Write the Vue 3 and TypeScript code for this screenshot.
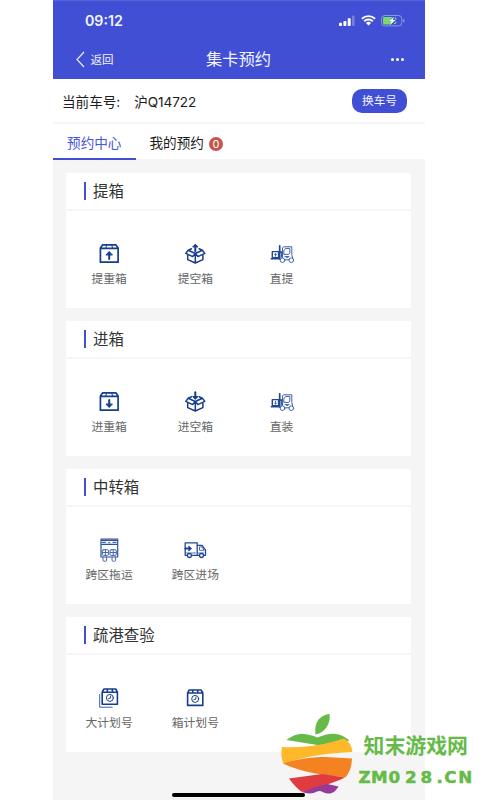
<script setup lang="ts">
type IconName = 'boxUp' | 'boxDown' | 'openUp' | 'openDown' | 'forkUp' | 'forkDown' | 'trailer' | 'truck' | 'plans' | 'plan'

interface Action {
  label: string
  icon: IconName
}

interface Section {
  title: string
  actions: Action[]
}

const sections: Section[] = [
  {
    title: '提箱',
    actions: [
      { label: '提重箱', icon: 'boxUp' },
      { label: '提空箱', icon: 'openUp' },
      { label: '直提', icon: 'forkUp' },
    ],
  },
  {
    title: '进箱',
    actions: [
      { label: '进重箱', icon: 'boxDown' },
      { label: '进空箱', icon: 'openDown' },
      { label: '直装', icon: 'forkDown' },
    ],
  },
  {
    title: '中转箱',
    actions: [
      { label: '跨区拖运', icon: 'trailer' },
      { label: '跨区进场', icon: 'truck' },
    ],
  },
  {
    title: '疏港查验',
    actions: [
      { label: '大计划号', icon: 'plans' },
      { label: '箱计划号', icon: 'plan' },
    ],
  },
]
</script>

<template>
  <div class="screen">
    <main class="phone">
      <header class="header">
        <div class="status">
          <span class="time">09:12</span>
          <svg class="status-icons" width="68" height="14" viewBox="0 0 68 14">
            <g fill="#fff">
              <rect x="1" y="8.7" width="3" height="3.3" rx=".8" />
              <rect x="5.4" y="7" width="3" height="5" rx=".8" />
              <rect x="9.7" y="4.2" width="3" height="7.8" rx=".8" />
              <rect x="14" y="1.5" width="2.6" height="10.5" rx=".8" opacity=".28" />
              <path d="M28 9a3.2 3.2 0 0 1 5 0l-2.5 2.6z" />
            </g>
            <g fill="none" stroke="#fff" stroke-width="1.9">
              <path d="M23.9 4.8a9.6 9.6 0 0 1 13.2 0M26.2 7.2a6.3 6.3 0 0 1 8.6 0" />
            </g>
            <rect x="43.5" y="1.5" width="20.3" height="10.4" rx="3.3" fill="none" stroke="#fff" opacity=".4" />
            <path d="M46.4 3h8.2l-4 5h2.8l-.7 2.5h-6.3a1.4 1.4 0 0 1-1.4-1.4V4.400A1.400 1.400 0 0 1 46.400 3zM57.500 3l-1.300 2.500h2.200V4.200zM55 10.500l3.300-3.500v2.500z" fill="#78dc69" />
            <path d="M56 2.800 50.600 7.500h2.800l-1.400 3.400 5.500-4.900h-2.800z" fill="#fff" />
            <path d="M65.200 5v3.600q1.400-.7 1.400-1.800T65.200 5z" fill="#fff" opacity=".5" />
          </svg>
        </div>
        <div class="nav">
          <div class="back">
            <svg width="9" height="17" viewBox="0 0 9 17"><path d="M8 1 1 8.500l7 7.500" fill="none" stroke="#e8eaff" stroke-width="1.200" /></svg>
            <span>返回</span>
          </div>
          <h1>集卡预约</h1>
          <div class="more"><i /><i /><i /></div>
        </div>
      </header>

      <div class="vehicle">
        <span class="vehicle-label">当前车号:</span>
        <span class="plate">沪Q14722</span>
        <button class="change">换车号</button>
      </div>

      <nav class="tabs">
        <div class="tab active">预约中心</div>
        <div class="tab">我的预约<span class="badge">0</span></div>
      </nav>

      <div class="content">
        <section v-for="section in sections" :key="section.title" class="card">
          <h2><span>{{ section.title }}</span></h2>
          <div class="grid">
            <div v-for="action in section.actions" :key="action.label" class="action">
              <svg class="icon" width="26" height="26" viewBox="0 0 26 26" fill="none" stroke="#173e8c" stroke-linecap="round" stroke-linejoin="round">
                <g v-if="action.icon === 'boxUp' || action.icon === 'boxDown'" stroke-width="1.700">
                  <path d="M4.400 7v14.200h17.700V7l-2.300-3.200H6.700zM4.400 7.300h17.700" />
                  <path d="M10.500 4.200 9.800 7M15.800 4.200l.7 2.800" stroke-width="1" />
                  <path v-if="action.icon === 'boxUp'" d="M13.200 17.900v-5.500" stroke-width="2" />
                  <path v-else d="M13.200 11v5.500" stroke-width="2" />
                  <path v-if="action.icon === 'boxUp'" d="m10.200 13.700 3-3.200 3 3.200z" fill="#173e8c" stroke-width="1" />
                  <path v-else d="m10.200 15.300 3 3.200 3-3.200z" fill="#173e8c" stroke-width="1" />
                </g>
                <g v-else-if="action.icon === 'openUp' || action.icon === 'openDown'" stroke-width="1.500">
                  <path d="M9.500 7.800 6.200 9.200 13.300 12.500l7.100-3.300L17.100 7.800M6.200 9.200l-2.400 3.200 6.900 3.200 2.600-3.100 2.600 3.100 6.900-3.200-2.400-3.200M5.700 14v4.600l7.600 3.400 7.600-3.400V14M13.300 12.800v8.800" />
                  <path v-if="action.icon === 'openUp'" d="M13.300 10.300V4.500" stroke-width="2" />
                  <path v-else d="M13.300 3.300v6" stroke-width="2" />
                  <path v-if="action.icon === 'openUp'" d="m10.900 5.700 2.400-2.500 2.400 2.500z" fill="#173e8c" stroke-width="1" />
                  <path v-else d="m10.900 7.800 2.400 2.500 2.400-2.500z" fill="#173e8c" stroke-width="1" />
                </g>
                <g v-else-if="action.icon === 'forkUp' || action.icon === 'forkDown'" stroke="#3e63a9" stroke-width="1">
                  <path d="M3.300 10.600h6.300v6H3.300zM2.200 17.800h8.200" stroke-width="1.400" stroke="#204797" />
                  <path d="M10.700 4.800v13M10.700 11h2.300v5" stroke-width="1.700" stroke="#204797" />
                  <path d="M13.500 16V7l1-1.200h8.300v7.700l.8 3.500M16.200 7.800l-1.400 2v3.600h5l1-1.500V7.800zM16 15.600h4M17 15.600l1.200 1.400 1.200-1.400" />
                  <circle cx="13.500" cy="19.200" r="2.300" /><circle cx="22.300" cy="19.200" r="2.300" />
                  <path d="M16 18.800h3.800" />
                  <path v-if="action.icon === 'forkUp'" d="M6.500 15.300v-2.800M5.500 13.500l1-1 1 1" />
                  <path v-else d="M6.500 12.300v2.800M5.500 14.100l1 1 1-1" />
                </g>
                <g v-else-if="action.icon === 'trailer'" stroke="#4669ab" stroke-width="1">
                  <path d="M5 2h16.700v18H5zM5 3.300h16.700M5 7.300h16.700" stroke-width="1.200" stroke="#2b529c" />
                  <path d="M6.500 5.300h3M17 5.300h3M12.800 5.600h1" stroke-width="1.300" />
                  <rect x="6.300" y="12.700" width="6.300" height="5.700" rx="1.300" /><rect x="14" y="12.700" width="6.300" height="5.700" rx="1.300" />
                  <path d="M9.400 12.700v5.300M6.500 15.500h6M17.200 12.700v5.300M14.400 15.500h5.800M7 20v3.200q0 1 1 1h1.600q1 0 1-1V20M16 20v3.200q0 1 1 1h1.600q1 0 1-1V20" />
                </g>
                <g v-else-if="action.icon === 'truck'" stroke="#204797" stroke-width="1.300">
                  <path d="M3.200 5.800h12v12.500h-5.200M5.300 18.300H3.200V5.800M15.200 8.300h5l3.300 4.800v5.200h-1.600M17 18.300h-1.800" />
                  <path d="M17.500 10.300v3h4.500l-1.900-3zM4.500 16h9M16.500 16h5" stroke-width=".8" />
                  <path d="M3.200 11.500h4.500" stroke-width="1.800" /><path d="m7 9.200 2.600 2.300L7 13.800z" fill="#173e8c" stroke-width=".8" />
                  <circle cx="7.400" cy="18.500" r="2" /><circle cx="19.500" cy="18.500" r="2" />
                </g>
                <g v-else-if="action.icon === 'plans'" stroke-width="1.600">
                  <path d="M6.200 7v12.300h15.200V7l-1.700-3H8zM6.200 7.200h15.200M11.300 4.200v2.500M16.400 4.200v2.500" />
                  <path d="M3.700 9.500v12.700h12.500" stroke-width="1" stroke="#3b60a6" />
                  <circle cx="13.900" cy="12.900" r="3.500" stroke-width="1" /><path d="M14.600 11v2.100l-2 .5" stroke-width=".9" />
                </g>
                <g v-else stroke-width="1.600">
                  <path d="M5.600 8v12.400h15.200V8l-1.700-3H7.300zM5.600 8h15.200M10.700 5.200v2.500M15.700 5.200v2.500" />
                  <circle cx="13.200" cy="13.900" r="3.500" stroke-width="1" /><path d="M13.900 12v2.100l-2 .5" stroke-width=".9" />
                </g>
              </svg>
              <span>{{ action.label }}</span>
            </div>
          </div>
        </section>
      </div>
      <div class="home-bar" />
    </main>

    <svg class="watermark" width="210" height="95" viewBox="270 705 210 95">
      <path d="M315.500 734.500c-1.500-11 3-19 14-20.700 1.500 9-4 19-14 20.700z" fill="#65ba48" />
      <path d="M286.500 740c11-8.500 20-6.500 31-2.500 12-5 21-6 32 3l-29 5z" fill="#65ba48" />
      <path d="M282 747c24 1.500 44-3 62-8.500 5.500 3 8 8 8.300 13.500-22 1-46 4-69 11.500-2-5-2.500-11-1.300-16.500z" fill="#fdb92a" />
      <path d="M283 763.500c12-4 27-6.500 43-6.500l26 1.500c-.3 7.500-2 13.500-6.500 18.700-21-1.500-45-5-62.500-13.700z" fill="#f58220" />
      <path d="M289 778.500 322 774l23 3.500c-11 5.500-24 9-43 14.500-5-3.500-9-8-13-13.500z" fill="#e03c3f" />
      <path d="M302 792c9-3.500 17-6.500 25.500-8l11 2.500c-3 5-6 7.500-11 7-4-.4-7-4-10.500-2-4 2.500-10 2.500-15 .5z" fill="#963a96" />
      <text class="site-name" x="363.500" y="753">知末游戏网</text>
      <text class="site-url" x="358.500 371 388.500 405 420.500 436.500 444.200 458.200" y="783">ZM028.CN</text>
    </svg>
  </div>
</template>

<style>
body {
  margin: 0;
  background: #fff;
}
</style>

<style scoped>
.screen {
  position: relative;
  width: 480px;
  height: 800px;
  overflow: hidden;
  font-family: Inter, "Noto Sans CJK SC", sans-serif;
}
.phone {
  position: relative;
  width: 372px;
  height: 800px;
  margin-left: 53px;
  background: #f5f5f5;
}
.header {
  height: 79px;
  box-sizing: border-box;
  border-top: 1px solid #5765dc;
  background: #404fd4;
  color: #f4f5ff;
}
.status {
  display: flex;
  align-items: center;
  justify-content: space-between;
  height: 38px;
  padding: 0 19px 0 32px;
}
.status-icons {
  margin-top: 1px;
}
.time {
  font-size: 14.2px;
  font-weight: 600;
}
.nav {
  display: grid;
  grid-template-columns: 1fr auto 1fr;
  align-items: center;
  height: 40px;
  padding: 0 21px 0 23px;
}
.back {
  display: flex;
  align-items: center;
  gap: 5.5px;
  font-size: 11.5px;
}
h1 {
  margin: 0 3px 0 0;
  font-size: 16.3px;
  line-height: 20px;
  font-weight: 400;
}
.more {
  display: flex;
  justify-content: flex-end;
  gap: 2px;
}
.more i {
  width: 3px;
  height: 3px;
  border-radius: 50%;
  background: #fff;
}
.vehicle {
  display: flex;
  align-items: center;
  height: 43px;
  padding: 0 18px 0 9px;
  border-bottom: 2px solid #f5f5f5;
  background: #fff;
  color: #1c1c1c;
  font-size: 13.6px;
}
.plate {
  margin-left: 14px;
  font-size: 13.6px;
  letter-spacing: -.1px;
}
.change {
  margin-left: auto;
  width: 55px;
  height: 24px;
  padding: 0;
  border: 0;
  border-radius: 10px;
  background: #404fd4;
  color: #f4f5ff;
  font: 11.7px/24px Inter, "Noto Sans CJK SC", sans-serif;
}
.tabs {
  display: flex;
  height: 36px;
  background: linear-gradient(#fff 35px, #f5f5f5 35px);
  color: #1c1c1c;
  font-size: 13.6px;
  line-height: 39px;
}
.tab {
  display: flex;
  align-items: center;
  box-sizing: border-box;
  height: 36px;
  padding: 2px 0 0 14px;
}
.tab.active {
  width: 82.5px;
  padding: 4px 0 0;
  justify-content: center;
  border-bottom: 2px solid #404fd4;
  color: #4655dc;
}
.badge {
  width: 14px;
  height: 14px;
  margin: 2px 0 0 5px;
  border-radius: 50%;
  background: #c5564b;
  color: #fff;
  font-size: 11px;
  line-height: 14px;
  text-align: center;
}
.content {
  display: flex;
  flex-direction: column;
  gap: 13px;
  padding: 13px 14px 0 13px;
}
.card {
  height: 135px;
  background: #fff;
}
h2 {
  display: flex;
  align-items: center;
  gap: 7px;
  height: 36px;
  margin: 0;
  padding-left: 18px;
  border-bottom: 2px solid #f5f5f5;
  color: #333;
  font-size: 15.4px;
  line-height: 20px;
  font-weight: 400;
}
h2::before {
  content: "";
  width: 2px;
  height: 18px;
  background: #404fd4;
}
h2 span {
  padding-top: 2px;
}
.grid {
  display: grid;
  grid-template-columns: repeat(4, 1fr);
  padding-top: 30px;
}
.action {
  display: flex;
  flex-direction: column;
  align-items: center;
  gap: 3px;
  color: #666;
  font-size: 11.8px;
  line-height: 18px;
}
.icon {
  display: block;
}
.home-bar {
  position: absolute;
  left: 119px;
  bottom: 3px;
  width: 133px;
  height: 4.5px;
  border-radius: 3px;
  background: #000;
}
.watermark {
  position: absolute;
  left: 270px;
  top: 705px;
}
.site-name {
  fill: #65ba48;
  font-family: "Noto Sans CJK SC", sans-serif;
  font-size: 20.9px;
  font-weight: 700;
}
.site-url {
  fill: #65ba48;
  stroke: #65ba48;
  stroke-width: .5px;
  font-family: "DejaVu Sans", sans-serif;
  font-size: 16.7px;
  font-weight: 700;
}
</style>
